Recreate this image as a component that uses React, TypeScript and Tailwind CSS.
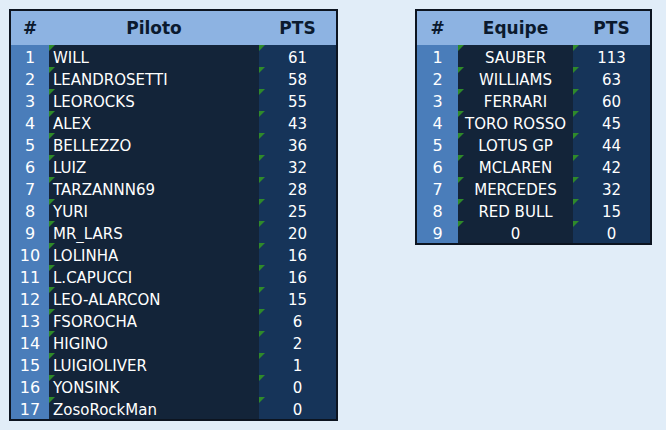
const pilotos: [string, number][] = [
  ["WILL", 61],
  ["LEANDROSETTI", 58],
  ["LEOROCKS", 55],
  ["ALEX", 43],
  ["BELLEZZO", 36],
  ["LUIZ", 32],
  ["TARZANNN69", 28],
  ["YURI", 25],
  ["MR_LARS", 20],
  ["LOLINHA", 16],
  ["L.CAPUCCI", 16],
  ["LEO-ALARCON", 15],
  ["FSOROCHA", 6],
  ["HIGINO", 2],
  ["LUIGIOLIVER", 1],
  ["YONSINK", 0],
  ["ZosoRockMan", 0],
];

const equipes: [string, number][] = [
  ["SAUBER", 113],
  ["WILLIAMS", 63],
  ["FERRARI", 60],
  ["TORO ROSSO", 45],
  ["LOTUS GP", 44],
  ["MCLAREN", 42],
  ["MERCEDES", 32],
  ["RED BULL", 15],
  ["0", 0],
];

// little green corner, like the spreadsheet's error flag
function Flag() {
  return (
    <span className="absolute left-0 top-0 h-0 w-0 border-r-[6px] border-t-[6px] border-r-transparent border-t-[#2f8a2a]" />
  );
}

const th = "h-[34px] p-0 pt-[2px] text-center text-[17px] font-bold text-[#0b1a2e]";
const td = "relative h-[22px] p-0 pt-[4px] leading-[18px]";

function Standings({
  label,
  rows,
  numWidth,
  nameWidth,
  centerNames,
}: {
  label: string;
  rows: [string, number][];
  numWidth: string;
  nameWidth: string;
  centerNames?: boolean;
}) {
  return (
    <table className="border-separate border-spacing-0 border-2 border-[#0c1420] text-[15px] text-white">
      <thead className="bg-[#8db3e2]">
        <tr>
          <th className={`${th} ${numWidth}`}>#</th>
          <th className={`${th} ${nameWidth}`}>{label}</th>
          <th className={`${th} w-[77px]`}>PTS</th>
        </tr>
      </thead>
      <tbody>
        {rows.map(([name, pts], i) => (
          <tr key={i}>
            <td className={`${td} bg-[#4a7dba] text-center text-[16px]`}>{i + 1}</td>
            <td
              className={`${td} bg-[#132439] ${centerNames ? "text-center" : "pl-[4px] text-left"}`}
            >
              <Flag />
              {name}
            </td>
            <td className={`${td} bg-[#163459] text-center`}>
              <Flag />
              {pts}
            </td>
          </tr>
        ))}
      </tbody>
    </table>
  );
}

export default function App() {
  return (
    <div
      className="flex h-[430px] w-[666px] items-start gap-[77px] bg-[#e1edf8] pl-[9px] pt-[9px]"
      style={{ fontFamily: "Tahoma, 'DejaVu Sans', sans-serif" }}
    >
      <Standings label="Piloto" rows={pilotos} numWidth="w-[38px]" nameWidth="w-[210px]" />
      <Standings
        label="Equipe"
        rows={equipes}
        numWidth="w-[41px]"
        nameWidth="w-[115px]"
        centerNames
      />
    </div>
  );
}
